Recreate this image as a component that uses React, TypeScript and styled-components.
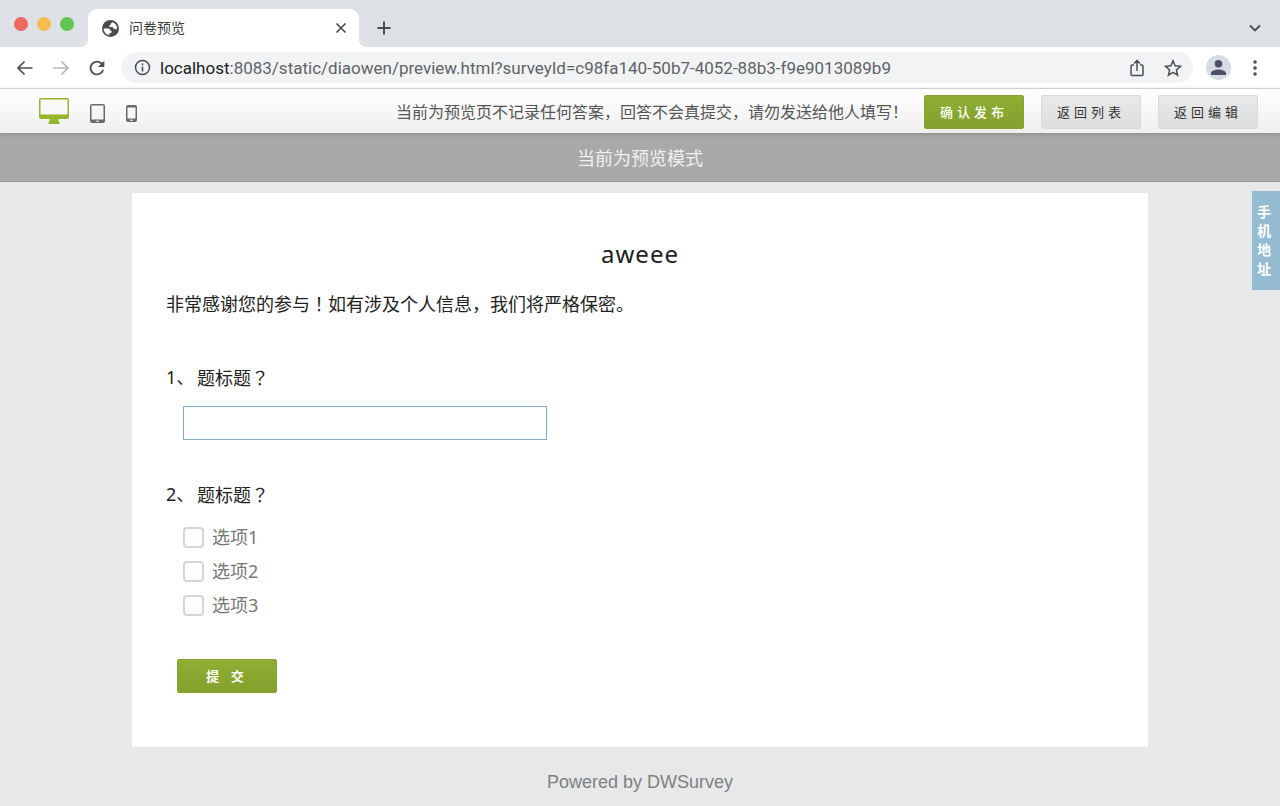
import React from "react";
import styled, { createGlobalStyle, css } from "styled-components";

const uiFont = `Roboto, "Noto Sans CJK SC", sans-serif`;
const pageFont = `"Noto Sans", "Noto Sans CJK SC", sans-serif`;

const GlobalStyle = createGlobalStyle`
  *, *::before, *::after { box-sizing: border-box; }
  body { margin: 0; background: #e6e8ea; font-family: ${pageFont}; color: #222; }
  button, input { font: inherit; }
  svg { flex: none; }
  h1, h2, p, fieldset, legend { margin: 0; padding: 0; border: 0; font-weight: 400; }
`;

const Window = styled.div`
  min-height: 100vh;
  display: flex;
  flex-direction: column;
`;

const TabStrip = styled.header`
  height: 47px;
  padding: 9px 17px 0 14px;
  display: flex;
  background: #dee1e6;
`;

const Lights = styled.div`
  display: flex;
  gap: 9px;
  padding-top: 8px;
  margin-right: 14px;
`;

const Light = styled.span<{ $color: string }>`
  width: 14px;
  height: 14px;
  border-radius: 50%;
  background: ${(p) => p.$color};
`;

const Tab = styled.div`
  position: relative;
  width: 271px;
  height: 38px;
  padding: 0 10px 0 14px;
  display: flex;
  align-items: center;
  background: #fff;
  border-radius: 9px 9px 0 0;
  font: 14px/20px ${uiFont};
  color: #3c4043;

  &::before, &::after {
    content: "";
    position: absolute;
    bottom: 0;
    width: 8px;
    height: 8px;
  }
  &::before { right: 100%; background: radial-gradient(circle at 0 0, #dee1e6 8px, #fff 8px); }
  &::after { left: 100%; background: radial-gradient(circle at 100% 0, #dee1e6 8px, #fff 8px); }
`;

const TabTitle = styled.span`
  flex: 1;
  padding-left: 10px;
`;

const IconButton = styled.button<{ $push?: boolean; $faded?: boolean }>`
  flex: none;
  display: flex;
  align-items: center;
  justify-content: center;
  width: 16px;
  height: 100%;
  padding: 0;
  border: 0;
  background: none;
  color: ${(p) => (p.$faded ? "#b4b6b9" : "#4a4d51")};
  cursor: pointer;
  ${(p) => p.$push && css`margin-left: auto;`}
`;

const NewTab = styled.div`
  margin-left: 17px;
`;

const AddressRow = styled.nav`
  height: 42px;
  padding: 0 17px;
  display: flex;
  align-items: center;
  gap: 16px;
  background: #fff;
  border-bottom: 1px solid #d8dadd;
`;

const History = styled.div`
  height: 100%;
  display: flex;
  gap: 20px;
`;

const AddressBox = styled.div`
  flex: 1;
  min-width: 0;
  height: 31px;
  margin-right: -3px;
  padding: 0 12px 0 13px;
  display: flex;
  align-items: center;
  gap: 20px;
  border-radius: 16px;
  background: #f1f3f4;
  color: #4a4d51;
`;

const Site = styled.div`
  flex: 1;
  min-width: 0;
  display: flex;
  align-items: center;
  gap: 9px;
`;

const Url = styled.span`
  min-width: 0;
  overflow: hidden;
  white-space: nowrap;
  font: 17px/20px ${uiFont};
  color: #5f6368;
`;

const Host = styled.span`
  color: #202124;
`;

const Avatar = styled.button`
  flex: none;
  width: 25px;
  height: 25px;
  padding: 0;
  border: 0;
  border-radius: 50%;
  display: flex;
  align-items: center;
  justify-content: center;
  background: #d6dbe4;
  color: #4a5068;
`;

const PreviewBar = styled.div`
  position: relative;
  height: 44px;
  padding: 2px 22px 0 39px;
  display: flex;
  align-items: center;
  background: linear-gradient(#fff, #efefef);
  box-shadow: 0 1px 5px rgba(0, 0, 0, 0.2);
`;

const Devices = styled.div`
  display: flex;
  align-items: center;
  gap: 21px;
  margin-right: auto;
`;

const DeviceButton = styled.button<{ $active?: boolean }>`
  display: flex;
  padding: ${(p) => (p.$active ? "0 0 2px" : "3px 0 0")};
  border: 0;
  background: none;
  color: ${(p) => (p.$active ? "#94b52c" : "#6a6a6a")};
  cursor: pointer;
`;

const Notice = styled.p`
  margin-right: 16px;
  white-space: nowrap;
  font-size: 16px;
  line-height: 24px;
  color: #555;
`;

const Actions = styled.div`
  display: flex;
  gap: 17px;
`;

const Button = styled.button<{ $primary?: boolean; $strong?: boolean }>`
  width: 100px;
  height: 34px;
  padding: 0;
  border: 1px solid ${(p) => (p.$primary ? "#86a32f" : "#d9d9d9")};
  border-radius: 2px;
  font-size: 13px;
  line-height: 20px;
  letter-spacing: 4px;
  font-weight: ${(p) => (p.$strong ? 700 : p.$primary ? 500 : 400)};
  color: ${(p) => (p.$primary ? "#fff" : "#333")};
  background: ${(p) => (p.$primary ? "linear-gradient(#8fae33, #83a12d)" : "linear-gradient(#e9e9e9, #dedede)")};
  cursor: pointer;
`;

const Banner = styled.div`
  height: 49px;
  border-bottom: 1px solid #9b9b9b;
  background: #a9a9a9;
  text-align: center;
  font-size: 18px;
  line-height: 50px;
  color: #f0f0f0;
`;

const Main = styled.main`
  position: relative;
  padding: 11px 16px 0;
`;

const Sheet = styled.form`
  max-width: 1016px;
  margin: 0 auto;
  padding: 43px 34px 54px;
  background: #fff;
`;

const Title = styled.h1`
  text-align: center;
  font-size: 24px;
  line-height: 36px;
  letter-spacing: 1px;
`;

const Intro = styled.p`
  margin: 17px 0 45px;
  font-size: 18px;
  line-height: 28px;
`;

const Centered = styled.span`
  font-family: "Noto Sans CJK TC", sans-serif;
`;

const Question = styled.fieldset`
  min-width: 0;
  margin-bottom: 40px;
  font-size: 18px;
  line-height: 28px;
`;

const Heading = styled.legend`
  display: flex;
  gap: 9px;
  margin-bottom: 14px;
`;

const Number = styled.span`
  width: 22px;
  white-space: nowrap;
`;

const Answer = styled.input`
  display: block;
  width: 364px;
  max-width: 100%;
  height: 34px;
  margin-left: 17px;
  padding: 0 8px;
  border: 1px solid #83a9c4;
  border-radius: 0;
  background: #fff;
  outline: 0;
`;

const Choices = styled.div`
  display: flex;
  flex-direction: column;
  align-items: flex-start;
  gap: 6px;
  padding-left: 17px;
`;

const Choice = styled.label`
  display: flex;
  align-items: center;
  gap: 8px;
  color: #777;
`;

const Tick = styled.input`
  appearance: none;
  width: 21px;
  height: 21px;
  margin: 0;
  border: 2px solid #d3d6d8;
  border-radius: 4px;
  background: #fcfdfe;
`;

const Submit = styled.div`
  padding-left: 11px;
`;

const PhoneLink = styled.a`
  position: absolute;
  top: 9px;
  right: 0;
  width: 28px;
  height: 99px;
  padding: 11px 5px;
  background: #95bbd0;
  color: #fff;
  font-size: 14px;
  line-height: 19px;
  font-weight: 700;
  text-decoration: none;
`;

const Footer = styled.footer`
  padding: 21px 0 10px;
  text-align: center;
  font: 18px/28px "Liberation Sans", sans-serif;
  color: #808080;
`;

const Stroke = ({ size = 18, d, width = 2 }: { size?: number; d: string; width?: number }) => (
  <svg width={size} height={size} viewBox="0 0 18 18" fill="none" stroke="currentColor" strokeWidth={width}>
    <path d={d} />
  </svg>
);

const Desktop = () => (
  <svg width="30" height="26" viewBox="0 0 30 26" fill="currentColor">
    <path fillRule="evenodd" d="M2 0h26a2 2 0 0 1 2 2v17a2 2 0 0 1-2 2h-8.500v2.500h1V26h-11v-2.500h1V21H2a2 2 0 0 1-2-2V2a2 2 0 0 1 2-2zM1.500 1.500v15h27v-15z" />
  </svg>
);

const Tablet = () => (
  <svg width="15" height="19" viewBox="0 0 15 19" fill="currentColor">
    <path fillRule="evenodd" d="M2 0h11a2 2 0 0 1 2 2v15a2 2 0 0 1-2 2H2a2 2 0 0 1-2-2V2a2 2 0 0 1 2-2zM1.500 1.500v14h12v-14zM6.500 16.500V18h2v-1.500z" />
  </svg>
);

const Phone = () => (
  <svg width="11" height="17" viewBox="0 0 11 17" fill="currentColor">
    <path fillRule="evenodd" d="M2 0h7a2 2 0 0 1 2 2v13a2 2 0 0 1-2 2H2a2 2 0 0 1-2-2V2a2 2 0 0 1 2-2zM1.500 2.500v11h8v-11zM4.500 14.500V16h2v-1.500z" />
  </svg>
);

const Globe = () => (
  <svg width="17" height="17" viewBox="2 2 20 20">
    <circle cx="12" cy="12" r="10" fill="#4a4d51" />
    <path fill="#fff" d="M14.500 4.500c3.300 1.200 5.300 4 5.400 7.500-1.200 1.300-3.400 1.300-4.400 0-.4-1.200-1-1.700-2.300-1.700H11c-.8-1.300-.2-2.400 1-2.800.4-1.400 1-2.400 2.500-3zM4 12h5.500c1.400.2 2 1 2 2.200 1.300.2 2 .8 1.800 1.900-.2 1-1.200 1.300-2.300 1.400l-.7 2.200C6.700 19.200 4 16 4 12z" />
  </svg>
);

const options = ["选项1", "选项2", "选项3"];

export default function App() {
  return (
    <Window>
      <GlobalStyle />
      <TabStrip>
        <Lights>
          <Light $color="#ec6a5e" />
          <Light $color="#f5bf4f" />
          <Light $color="#61c554" />
        </Lights>
        <Tab>
          <Globe />
          <TabTitle>问卷预览</TabTitle>
          <IconButton aria-label="关闭标签页"><Stroke width={1.7} d="M4.500 4.500l9 9M13.500 4.500l-9 9" /></IconButton>
        </Tab>
        <NewTab>
          <IconButton aria-label="新标签页"><Stroke d="M9 2.500v13M2.500 9h13" /></IconButton>
        </NewTab>
        <IconButton $push aria-label="搜索标签页"><Stroke width={1.8} d="M4 6.500l5 5 5-5" /></IconButton>
      </TabStrip>
      <AddressRow>
        <History>
          <IconButton aria-label="后退"><Stroke width={1.7} d="M16.500 9H2M8.500 2.500L2 9l6.500 6.500" /></IconButton>
          <IconButton $faded aria-label="前进"><Stroke width={1.7} d="M1.500 9H16M9.500 2.500L16 9l-6.500 6.500" /></IconButton>
          <IconButton aria-label="刷新">
            <svg width="22" height="22" viewBox="0 0 24 24" fill="currentColor">
              <path d="M17.650 6.350A8 8 0 1 0 19.730 14h-2.080A6 6 0 1 1 16.220 7.780L13 11h7V4z" />
            </svg>
          </IconButton>
        </History>
        <AddressBox>
          <Site>
            <svg width="17" height="17" viewBox="0 0 17 17" fill="none" stroke="currentColor" strokeWidth="1.500">
              <circle cx="8.500" cy="8.500" r="7" />
              <path d="M8.500 7.500v5M8.500 4.500v1.700" />
            </svg>
            <Url><Host>localhost</Host>:8083/static/diaowen/preview.html?surveyId=c98fa140-50b7-4052-88b3-f9e9013089b9</Url>
          </Site>
          <IconButton aria-label="分享"><Stroke width={1.5} d="M6 6H4.200Q3 6 3 7.200v8Q3 16.500 4.200 16.500h9.600q1.200 0 1.200-1.300v-8Q15 6 13.800 6H12M9 12V2M6 4.500l3-3 3 3" /></IconButton>
          <IconButton aria-label="收藏"><Stroke width={1.5} d="M9 1.800l2.100 5 5.400.5-4.100 3.600 1.200 5.300L9 13.400l-4.600 2.800 1.200-5.300-4.100-3.600 5.400-.5z" /></IconButton>
        </AddressBox>
        <Avatar aria-label="用户">
          <svg width="15" height="15" viewBox="4 4 16 16" fill="currentColor">
            <path d="M12 12a4 4 0 1 0 0-8 4 4 0 0 0 0 8zm0 2c-2.700 0-8 1.300-8 4v2h16v-2c0-2.700-5.300-4-8-4z" />
          </svg>
        </Avatar>
        <IconButton aria-label="菜单">
          <svg width="4" height="16" viewBox="0 0 4 16" fill="currentColor">
            <circle cx="2" cy="2" r="1.800" /><circle cx="2" cy="8" r="1.800" /><circle cx="2" cy="14" r="1.800" />
          </svg>
        </IconButton>
      </AddressRow>
      <PreviewBar>
        <Devices>
          <DeviceButton $active aria-label="电脑"><Desktop /></DeviceButton>
          <DeviceButton aria-label="平板"><Tablet /></DeviceButton>
          <DeviceButton aria-label="手机"><Phone /></DeviceButton>
        </Devices>
        <Notice>当前为预览页不记录任何答案，回答不会真提交，请勿发送给他人填写！</Notice>
        <Actions>
          <Button $primary>确认发布</Button>
          <Button>返回列表</Button>
          <Button>返回编辑</Button>
        </Actions>
      </PreviewBar>
      <Banner>当前为预览模式</Banner>
      <Main>
        <PhoneLink href="#phone">手机地址</PhoneLink>
        <Sheet onSubmit={(e) => e.preventDefault()}>
          <Title>aweee</Title>
          <Intro>非常感谢您的参与<Centered>！</Centered>如有涉及个人信息，我们将严格保密。</Intro>
          <Question>
            <Heading><Number>1、</Number><label htmlFor="q1">题标题<Centered>？</Centered></label></Heading>
            <Answer id="q1" type="text" />
          </Question>
          <Question>
            <Heading><Number>2、</Number><span>题标题<Centered>？</Centered></span></Heading>
            <Choices>
              {options.map((o) => (
                <Choice key={o}><Tick type="checkbox" />{o}</Choice>
              ))}
            </Choices>
          </Question>
          <Submit><Button $primary $strong type="submit">提 交</Button></Submit>
        </Sheet>
      </Main>
      <Footer>Powered by DWSurvey</Footer>
    </Window>
  );
}
